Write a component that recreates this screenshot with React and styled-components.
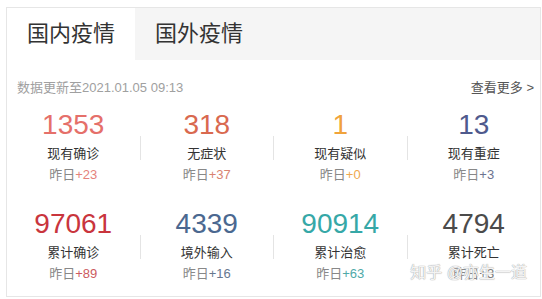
import React, { useState } from "react"
import styled, { createGlobalStyle } from "styled-components"

const GlobalStyle = createGlobalStyle`
  body {
    margin: 0;
    background: #fff;
    font-family: "Liberation Sans", "Noto Sans CJK SC", sans-serif;
  }
`

const Card = styled.div`
  position: relative;
  margin: 7px 1px 0 6px;
  border: 1px solid #e6e6e6;
  background: #fff;
`

const TabBar = styled.div`
  display: flex;
  height: 52px;
  background: #f5f5f5;
`

const Tab = styled.div`
  width: 128px;
  text-align: center;
  line-height: 52px;
  font-size: 22px;
  color: #333;
  cursor: pointer;
  background: ${props => (props.active ? "#fff" : "transparent")};
`

const InfoRow = styled.div`
  display: flex;
  justify-content: space-between;
  padding: 18px 6px 0 10px;
  font-size: 13px;
  line-height: 20px;
`

const UpdateTime = styled.div`
  color: #a0a0a0;
`

const MoreLink = styled.div`
  color: #555;
  cursor: pointer;
`

const StatsRow = styled.div`
  display: flex;
  height: 99px;
`

const Cell = styled.div`
  flex: 1;
  padding-top: 11px;
  text-align: center;
`

const Divider = styled.div`
  width: 1px;
  height: 24px;
  align-self: center;
  background: #e4e4e4;
`

const Number = styled.div`
  font-size: 28px;
  line-height: 32px;
  color: ${props => props.color};
`

const Label = styled.div`
  margin-top: 2px;
  font-size: 13px;
  line-height: 21px;
  color: #333;
`

const Yesterday = styled.div`
  font-size: 13px;
  line-height: 21px;
  color: #888;

  span {
    color: ${props => props.color};
  }
`

const Watermark = styled.div`
  position: absolute;
  right: 13px;
  bottom: 14px;
  font-size: 16px;
  line-height: 18px;
  color: rgba(255, 255, 255, 0.9);
  text-shadow: 0 0 1px #a5a5a5, 0 0 1px #a5a5a5;
  pointer-events: none;
`

const rows = [
  [
    { num: "1353", label: "现有确诊", add: "+23", color: "#e5706a", addColor: "#e5827c" },
    { num: "318", label: "无症状", add: "+37", color: "#d9694f", addColor: "#d98370" },
    { num: "1", label: "现有疑似", add: "+0", color: "#f0a33b", addColor: "#efa94e" },
    { num: "13", label: "现有重症", add: "+3", color: "#4f5a8d", addColor: "#6d7390" },
  ],
  [
    { num: "97061", label: "累计确诊", add: "+89", color: "#c9353d", addColor: "#cc5a60" },
    { num: "4339", label: "境外输入", add: "+16", color: "#4b6890", addColor: "#66778f" },
    { num: "90914", label: "累计治愈", add: "+63", color: "#36a8a7", addColor: "#4fa9a8" },
    { num: "4794", label: "累计死亡", add: "+3", color: "#4b4b4b", addColor: "#777" },
  ],
]

const App = () => {
  const [tab, setTab] = useState(0)

  return (
    <>
      <GlobalStyle />
      <Card>
        <TabBar>
          {["国内疫情", "国外疫情"].map((title, index) => (
            <Tab key={title} active={tab === index} onClick={() => setTab(index)}>
              {title}
            </Tab>
          ))}
        </TabBar>
        <InfoRow>
          <UpdateTime>数据更新至2021.01.05 09:13</UpdateTime>
          <MoreLink>查看更多 &gt;</MoreLink>
        </InfoRow>
        {rows.map((row, rowIndex) => (
          <StatsRow key={rowIndex}>
            {row.map((item, index) => (
              <React.Fragment key={item.label}>
                {index > 0 && <Divider />}
                <Cell>
                  <Number color={item.color}>{item.num}</Number>
                  <Label>{item.label}</Label>
                  <Yesterday color={item.addColor}>
                    昨日<span>{item.add}</span>
                  </Yesterday>
                </Cell>
              </React.Fragment>
            ))}
          </StatsRow>
        ))}
        <Watermark>知乎 @亦生一道</Watermark>
      </Card>
    </>
  )
}

export default App
